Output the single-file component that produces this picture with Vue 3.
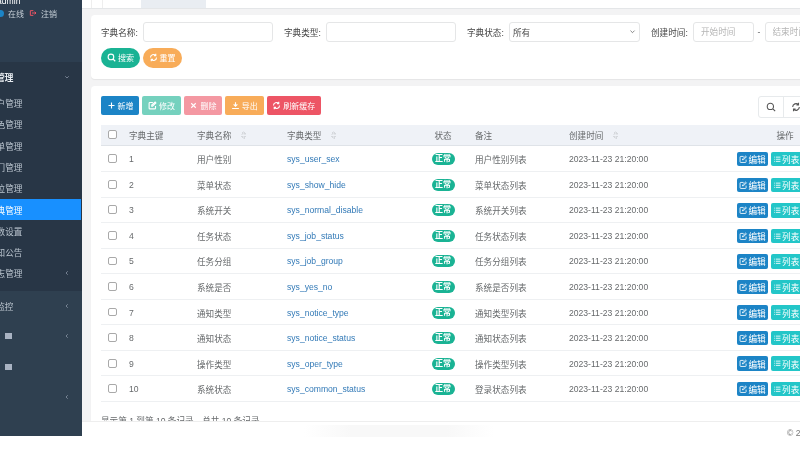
<script setup>
const icons = {
  search: 'M10.5 3a7.5 7.5 0 1 0 0 15a7.5 7.5 0 0 0 0-15zM16 16l6 6',
  refresh: 'M20 12a8 8 0 0 1-14 5.3M4 12a8 8 0 0 1 14-5.3M18 2v5h-5M6 22v-5h5',
  plus: 'M12 4v16M4 12h16',
  edit: 'M20 13v6a2 2 0 0 1-2 2H5a2 2 0 0 1-2-2V6a2 2 0 0 1 2-2h8M10 14v-3l9-8 2 2-9 9z',
  times: 'M6 6l12 12M18 6L6 18',
  download: 'M12 3v11M7 9l5 5 5-5M3 20h18',
  list: 'M3 6h2M8 6h13M3 12h2M8 12h13M3 18h2M8 18h13',
  logout: 'M13 5H4v14h9M9 12h12M17 8l4 4-4 4',
  down: 'M5 9l7 7 7-7',
  left: 'M15 5l-7 7 7 7',
}

const menuItems = ['用户管理', '角色管理', '菜单管理', '部门管理', '岗位管理', '字典管理', '参数设置', '通知公告', '日志管理']

const rows = [
  { id: 1, name: '用户性别', type: 'sys_user_sex', remark: '用户性别列表' },
  { id: 2, name: '菜单状态', type: 'sys_show_hide', remark: '菜单状态列表' },
  { id: 3, name: '系统开关', type: 'sys_normal_disable', remark: '系统开关列表' },
  { id: 4, name: '任务状态', type: 'sys_job_status', remark: '任务状态列表' },
  { id: 5, name: '任务分组', type: 'sys_job_group', remark: '任务分组列表' },
  { id: 6, name: '系统是否', type: 'sys_yes_no', remark: '系统是否列表' },
  { id: 7, name: '通知类型', type: 'sys_notice_type', remark: '通知类型列表' },
  { id: 8, name: '通知状态', type: 'sys_notice_status', remark: '通知状态列表' },
  { id: 9, name: '操作类型', type: 'sys_oper_type', remark: '操作类型列表' },
  { id: 10, name: '系统状态', type: 'sys_common_status', remark: '登录状态列表' },
]
</script>

<template>
  <div class="page">
    <aside class="sidebar">
      <div class="user-panel">
        <div class="user-name">admin</div>
        <div class="user-status">
          <span class="dot"></span>
          <span class="status-text">在线</span>
          <svg class="icon logout" viewBox="0 0 24 24"><path :d="icons.logout" /></svg>
          <span>注销</span>
        </div>
      </div>

      <div class="menu-open">
        <div class="menu-head">
          <span class="menu-title">系统管理</span>
          <svg class="icon chevron" viewBox="0 0 24 24"><path :d="icons.down" /></svg>
        </div>
        <div
          v-for="item in menuItems"
          :key="item"
          class="menu-item"
          :class="{ active: item === '字典管理' }"
        >
          <span>{{ item }}</span>
          <svg v-if="item === '日志管理'" class="icon chevron" viewBox="0 0 24 24"><path :d="icons.left" /></svg>
        </div>
      </div>

      <div class="menu-head plain">
        <span class="menu-title dim">系统监控</span>
        <svg class="icon chevron" viewBox="0 0 24 24"><path :d="icons.left" /></svg>
      </div>
      <div class="menu-head plain square-row">
        <span class="square"></span>
        <svg class="icon chevron" viewBox="0 0 24 24"><path :d="icons.left" /></svg>
      </div>
      <div class="menu-head plain square-row">
        <span class="square"></span>
      </div>
      <div class="menu-head plain square-row">
        <svg class="icon chevron" viewBox="0 0 24 24"><path :d="icons.left" /></svg>
      </div>
    </aside>

    <div class="right">
      <main class="content">
        <div class="tabs">
          <span class="tab first"></span>
          <span class="tab"></span>
          <span class="tab current"></span>
        </div>

        <section class="panel search-panel">
          <div class="form-row">
            <label>字典名称:</label>
            <input class="field wide" type="text" />
            <label class="next">字典类型:</label>
            <input class="field wide" type="text" />
            <label class="next">字典状态:</label>
            <div class="select-box">
              <span>所有</span>
              <svg class="icon select-arrow" viewBox="0 0 24 24"><path :d="icons.down" /></svg>
            </div>
            <label class="next">创建时间:</label>
            <input class="field date" type="text" placeholder="开始时间" />
            <span class="dash">-</span>
            <input class="field date" type="text" placeholder="结束时间" />
          </div>
          <div class="form-actions">
            <button class="btn round green">
              <svg class="icon" viewBox="0 0 24 24"><path :d="icons.search" /></svg>搜索
            </button>
            <button class="btn round orange">
              <svg class="icon" viewBox="0 0 24 24"><path :d="icons.refresh" /></svg>重置
            </button>
          </div>
        </section>

        <section class="panel table-panel">
          <div class="toolbar">
            <button class="btn blue b-add">
              <svg class="icon" viewBox="0 0 24 24"><path :d="icons.plus" /></svg>新增
            </button>
            <button class="btn green faded b-edit">
              <svg class="icon" viewBox="0 0 24 24"><path :d="icons.edit" /></svg>修改
            </button>
            <button class="btn red faded b-del">
              <svg class="icon" viewBox="0 0 24 24"><path :d="icons.times" /></svg>删除
            </button>
            <button class="btn orange b-exp">
              <svg class="icon" viewBox="0 0 24 24"><path :d="icons.download" /></svg>导出
            </button>
            <button class="btn red b-cache">
              <svg class="icon" viewBox="0 0 24 24"><path :d="icons.refresh" /></svg>刷新缓存
            </button>
            <div class="tools">
              <button class="tool">
                <svg class="icon" viewBox="0 0 24 24"><path :d="icons.search" /></svg>
              </button>
              <button class="tool">
                <svg class="icon" viewBox="0 0 24 24"><path :d="icons.refresh" /></svg>
              </button>
            </div>
          </div>

          <div class="grid-row head">
            <div class="cell check"><input type="checkbox" /></div>
            <div class="cell">字典主键</div>
            <div class="cell">字典名称<span class="sort"></span></div>
            <div class="cell">字典类型<span class="sort"></span></div>
            <div class="cell center">状态</div>
            <div class="cell">备注</div>
            <div class="cell">创建时间<span class="sort"></span></div>
            <div class="cell center">操作</div>
          </div>
          <div v-for="row in rows" :key="row.id" class="grid-row body-row">
            <div class="cell check"><input type="checkbox" /></div>
            <div class="cell">{{ row.id }}</div>
            <div class="cell">{{ row.name }}</div>
            <div class="cell"><a class="link">{{ row.type }}</a></div>
            <div class="cell center"><span class="badge">正常</span></div>
            <div class="cell">{{ row.remark }}</div>
            <div class="cell">2023-11-23 21:20:00</div>
            <div class="cell actions">
              <button class="mini blue">
                <svg class="icon" viewBox="0 0 24 24"><path :d="icons.edit" /></svg>编辑
              </button>
              <button class="mini cyan">
                <svg class="icon" viewBox="0 0 24 24"><path :d="icons.list" /></svg>列表
              </button>
              <button class="mini red">
                <svg class="icon" viewBox="0 0 24 24"><path :d="icons.times" /></svg>删除
              </button>
            </div>
          </div>
          <div class="summary">显示第 1 到第 10 条记录，总共 10 条记录</div>
        </section>
      </main>

      <footer class="footer">
        <span class="smear"></span>
        <span class="copyright">© 2023 Copyright</span>
      </footer>
    </div>
  </div>
</template>

<style>
html,
body {
  margin: 0;
  background: #fff;
}
</style>

<style scoped>
.page {
  width: 800px;
  height: 453px;
  display: flex;
  align-items: flex-start;
  overflow: hidden;
  background: #fff;
  font-family: "Liberation Sans", "Noto Sans CJK SC", sans-serif;
  font-size: 8.6px;
  color: #676a6c;
  filter: blur(0.3px);
}

.icon {
  width: 9px;
  height: 9px;
  fill: none;
  stroke: currentColor;
  stroke-width: 3;
  flex: none;
}

/* sidebar */
.sidebar {
  width: 82px;
  height: 436px;
  flex: none;
  overflow: hidden;
  background: #2f4050;
  color: #bcc6d0;
}

.user-panel {
  height: 62px;
  background: #2d3e50;
  overflow: hidden;
}

.user-name {
  margin: -5px 0 0 -3px;
  height: 12px;
  line-height: 12px;
  color: #fff;
}

.user-status {
  display: flex;
  align-items: center;
  margin: 0 0 0 -3px;
  height: 12px;
  font-size: 8px;
  color: #c9d2da;
}

.dot {
  width: 7px;
  height: 7px;
  border-radius: 50%;
  background: #1c84c6;
  margin-right: 4px;
}

.status-text {
  margin-right: 5px;
}

.logout {
  width: 8px;
  height: 8px;
  color: #ed5565;
  margin-right: 4px;
}

.menu-open {
  background: #283646;
  padding-bottom: 6.8px;
}

.menu-head {
  height: 30.4px;
  display: flex;
  align-items: center;
  padding-right: 12px;
}

.menu-title {
  margin-left: -21px;
  color: #e8edf1;
  font-weight: 700;
}

.menu-title.dim {
  font-weight: 400;
  color: #bcc6d0;
}

.menu-item {
  height: 21.3px;
  margin-right: 1px;
  padding-right: 11px;
  display: flex;
  align-items: center;
}

.menu-item > span {
  margin-left: -12px;
}

.menu-item.active {
  background: #1890ff;
  color: #fff;
}

.chevron {
  width: 6px;
  height: 6px;
  margin-left: auto;
  color: #a7b1c2;
  stroke-width: 2.4;
}

.square-row {
  padding-left: 5px;
}

.square {
  width: 6.5px;
  height: 6px;
  background: #a9b3c2;
}

/* main area */
.right {
  flex: 1;
  min-width: 0;
}

.content {
  height: 421px;
  overflow: hidden;
  background: #f3f3f4;
}

.tabs {
  height: 8.5px;
  display: flex;
  padding-left: 9px;
  background: #fff;
  border-bottom: 1px solid #e4e6e8;
  box-sizing: border-box;
}

.tab {
  width: 38px;
  border-left: 1px solid #eeeeee;
}

.tab.first {
  width: 10px;
}

.tab.current {
  width: 65px;
  border-left: 0;
  background: #e9edf2;
}

.panel {
  margin-left: 9px;
  width: 760px;
  background: #fff;
  border-radius: 4px;
  box-shadow: 0 1px 1px rgba(0, 0, 0, 0.06);
  box-sizing: border-box;
}

.search-panel {
  height: 64px;
  margin-top: 6.8px;
  padding: 7px 10px;
}

.form-row {
  display: flex;
  align-items: center;
  height: 19.3px;
}

.form-row label {
  width: 42px;
  flex: none;
  color: #444;
  white-space: nowrap;
}

.form-row label.next {
  margin-left: 11px;
}

.field {
  height: 19.3px;
  box-sizing: border-box;
  border: 1px solid #e5e6e7;
  border-radius: 3px;
  background: #fff;
  padding: 0 7px;
  font: inherit;
  outline: none;
  flex: none;
}

.field::placeholder {
  color: #b5b5b5;
}

.wide {
  width: 130px;
}

.date {
  width: 60.5px;
}

.dash {
  width: 11px;
  text-align: center;
  flex: none;
}

.select-box {
  width: 131px;
  height: 19.3px;
  box-sizing: border-box;
  flex: none;
  display: flex;
  align-items: center;
  justify-content: space-between;
  padding: 0 3px 0 3px;
  border: 1px solid #e5e6e7;
  border-radius: 3px;
  color: #444;
}

.select-arrow {
  width: 7px;
  height: 7px;
  stroke-width: 2.4;
  color: #555;
}

.form-actions {
  display: flex;
  gap: 2.5px;
  margin-top: 6.7px;
}

.btn {
  height: 19.4px;
  box-sizing: border-box;
  border: 0;
  border-radius: 2px;
  padding: 0;
  display: inline-flex;
  align-items: center;
  justify-content: center;
  gap: 2px;
  color: #fff;
  font: inherit;
  font-size: 8px;
}

.btn.round {
  width: 39px;
  border-radius: 10px;
}

.blue {
  background: #1c84c6;
}

.green {
  background: #1ab394;
}

.orange {
  background: #f8ac59;
}

.red {
  background: #ed5565;
}

.cyan {
  background: #23c6c8;
}

.faded {
  opacity: 0.6;
}

.table-panel {
  margin-top: 6.7px;
  padding: 10px;
  height: 400px;
}

.toolbar {
  height: 22px;
  display: flex;
  gap: 2.7px;
  margin-bottom: 7px;
}

.b-add {
  width: 38px;
}

.b-edit {
  width: 39.6px;
}

.b-del {
  width: 38px;
}

.b-exp {
  width: 39.3px;
}

.b-cache {
  width: 54px;
}

.tools {
  display: flex;
  margin-left: 434.4px;
}

.tool {
  width: 26px;
  height: 21.7px;
  padding: 0;
  background: #fff;
  border: 1px solid #e7eaec;
  margin-right: -1px;
  color: #555;
  display: flex;
  align-items: center;
  justify-content: center;
}

.tool .icon {
  width: 10px;
  height: 10px;
  stroke-width: 2.6;
}

.tool:first-child {
  border-radius: 3px 0 0 3px;
}

.grid-row {
  width: 740px;
  height: 25.55px;
  box-sizing: border-box;
  display: grid;
  grid-template-columns: 20px 68px 90px 140px 48px 94px 168px 112px;
  align-items: center;
  border-bottom: 1px solid #eef0f2;
  color: #676a6c;
}

.body-row {
  padding-top: 1px;
}

.grid-row.head {
  height: 21.5px;
  background: #eff2f7;
  border-bottom: 1px solid #dfe3e8;
}

.cell {
  padding-left: 8px;
  display: flex;
  align-items: center;
  white-space: nowrap;
}

.cell.center {
  padding-left: 0;
  justify-content: center;
}

.cell.check {
  padding-left: 7.3px;
}

.cell.check input {
  appearance: none;
  width: 8.8px;
  height: 8.8px;
  margin: 0 0 1px;
  background: #fff;
  border: 1px solid #a9a9a9;
  border-radius: 2px;
  box-sizing: border-box;
}

.sort {
  display: inline-block;
  width: 5px;
  height: 8px;
  margin-left: 10px;
  background:
    linear-gradient(to top left, #d5d8dc 50%, transparent 50%) 0 0 / 2.5px 3.5px no-repeat,
    linear-gradient(to top right, #d5d8dc 50%, transparent 50%) 2.5px 0 / 2.5px 3.5px no-repeat,
    linear-gradient(to bottom left, #d5d8dc 50%, transparent 50%) 0 100% / 2.5px 3.5px no-repeat,
    linear-gradient(to bottom right, #d5d8dc 50%, transparent 50%) 2.5px 100% / 2.5px 3.5px no-repeat;
}

.link {
  color: #337ab7;
}

.badge {
  width: 23px;
  height: 12px;
  line-height: 12px;
  border-radius: 6px;
  background: #1ab394;
  color: #fff;
  font-size: 8px;
  font-weight: 700;
  text-align: center;
}

.actions {
  gap: 2.7px;
}

.mini {
  width: 31px;
  height: 14.4px;
  flex: none;
  padding: 0;
  border: 0;
  border-radius: 2px;
  color: #fff;
  font: inherit;
  font-size: 8.6px;
  display: inline-flex;
  align-items: center;
  justify-content: center;
  gap: 0.5px;
}

.mini .icon {
  width: 8.5px;
  height: 8.5px;
  stroke-width: 2.4;
}

.summary {
  margin-top: 12.5px;
  white-space: nowrap;
}

/* footer */
.footer {
  height: 32px;
  position: relative;
  overflow: hidden;
  background: #fff;
  border-top: 1px solid #eeeeee;
  box-sizing: border-box;
  padding: 6px 0 0 705px;
  white-space: nowrap;
  color: #777;
}

.smear {
  position: absolute;
  left: 222px;
  top: 3px;
  width: 190px;
  height: 12px;
  background: linear-gradient(to right, transparent, #f8f8f8 25%, #f8f8f8 75%, transparent);
}

.copyright {
  position: relative;
}
</style>
